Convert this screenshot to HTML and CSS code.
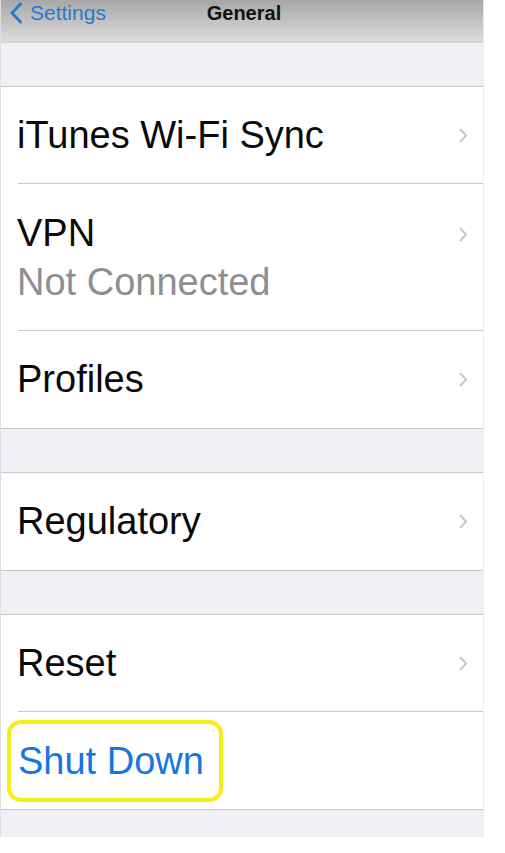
FILE: index.html
```html
<!DOCTYPE html>
<html lang="en">
<head>
    <meta charset="UTF-8">
    <meta name="viewport" content="width=device-width, initial-scale=1.0">
    <link rel="stylesheet" href="styles.css">
    <title>General</title>
</head>
<body>
    <div class="screen">

        <div class="navbar">
            <a class="back" href="#">
                <svg class="back-icon" width="14" height="22" viewBox="0 0 14 22">
                    <path d="M11.5 2 L3 11 L11.5 20" fill="none" stroke="#2a78cf" stroke-width="3" stroke-linecap="round" stroke-linejoin="round"/>
                </svg>
                <span>Settings</span>
            </a>
            <div class="title">General</div>
        </div>

        <div class="band"></div>

        <div class="group">
            <div class="row">
                <div class="label">iTunes Wi-Fi Sync</div>
                <svg class="chev" width="9" height="15" viewBox="0 0 9 15"><path d="M1.5 1.5 L7 7.5 L1.5 13.5" fill="none" stroke="#c7c7cc" stroke-width="2" stroke-linecap="round" stroke-linejoin="round"/></svg>
            </div>
            <div class="row row-tall">
                <div class="label">
                    <div>VPN</div>
                    <div class="sub">Not Connected</div>
                </div>
                <svg class="chev chev-top" width="9" height="15" viewBox="0 0 9 15"><path d="M1.5 1.5 L7 7.5 L1.5 13.5" fill="none" stroke="#c7c7cc" stroke-width="2" stroke-linecap="round" stroke-linejoin="round"/></svg>
            </div>
            <div class="row">
                <div class="label">Profiles</div>
                <svg class="chev" width="9" height="15" viewBox="0 0 9 15"><path d="M1.5 1.5 L7 7.5 L1.5 13.5" fill="none" stroke="#c7c7cc" stroke-width="2" stroke-linecap="round" stroke-linejoin="round"/></svg>
            </div>
        </div>

        <div class="band"></div>

        <div class="group">
            <div class="row">
                <div class="label">Regulatory</div>
                <svg class="chev" width="9" height="15" viewBox="0 0 9 15"><path d="M1.5 1.5 L7 7.5 L1.5 13.5" fill="none" stroke="#c7c7cc" stroke-width="2" stroke-linecap="round" stroke-linejoin="round"/></svg>
            </div>
        </div>

        <div class="band"></div>

        <div class="group">
            <div class="row">
                <div class="label">Reset</div>
                <svg class="chev" width="9" height="15" viewBox="0 0 9 15"><path d="M1.5 1.5 L7 7.5 L1.5 13.5" fill="none" stroke="#c7c7cc" stroke-width="2" stroke-linecap="round" stroke-linejoin="round"/></svg>
            </div>
            <div class="row row-action">
                <div class="label highlight">Shut Down</div>
            </div>
        </div>

        <div class="band band-end"></div>
    </div>
</body>
</html>
```

FILE: styles.css
```css
*{
    box-sizing: border-box;
}
body{
    margin: 0;
    background: #fff;
    font-family: "Liberation Sans", Arial, sans-serif;
    color: #0a0a0a;
}
.screen{
    width: 484px;
    border-left: 1px solid #dedee2;
    border-right: 1px solid #ececf0;
}

/* barra de cima */
.navbar{
    height: 43px;
    background: linear-gradient(#a7a7a7, #dcdcdc);
    border-bottom: 2px solid #d4d4d8;
    display: flex;
    align-items: flex-start;
    padding-top: 1px;
}
.back{
    display: flex;
    align-items: center;
    gap: 7px;
    padding-left: 8px;
    text-decoration: none;
    color: #2a78cf;
    font-size: 21px;
}
.title{
    flex: 1;
    text-align: center;
    margin-left: -101px;
    padding-top: 1px;
    font-size: 20px;
    font-weight: bold;
    color: #111;
}

.band{
    height: 43px;
    background: #efeff4;
}
.band-end{
    height: 27px;
}

.group{
    background: #fff;
    border-top: 1px solid #c8c7cc;
    border-bottom: 1px solid #c8c7cc;
}
.row{
    height: 97px;
    display: flex;
    align-items: center;
    justify-content: space-between;
    padding: 0 15px 0 16px;
    font-size: 38px;
    position: relative;
}
.row + .row::before{
    content: "";
    position: absolute;
    top: -1px;
    left: 17px;
    right: 0;
    border-top: 1px solid #c8c7cc;
}
.row-tall{
    height: 147px;
    align-items: flex-start;
    padding-top: 25px;
}
.row-tall .label div{
    line-height: 49px;
}
.sub{
    color: #8e8e93;
}
.chev-top{
    margin-top: 18px;
}
.row-action{
    padding-left: 6px;
}
.highlight{
    color: #1677e0;
    border: 4px solid #f7ec1c;
    border-radius: 14px;
    line-height: 74px;
    padding: 0 15px 0 7px;
}
```
